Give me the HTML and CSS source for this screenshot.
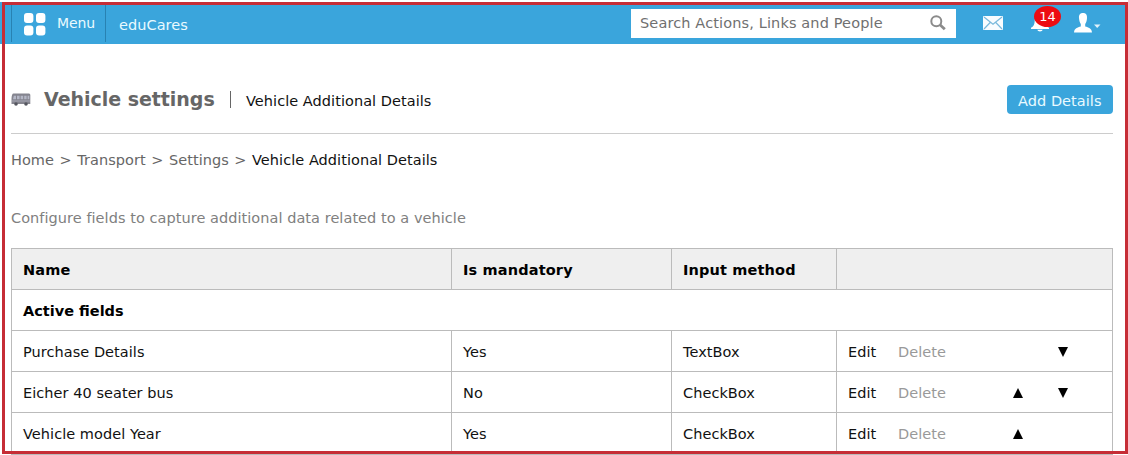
FILE: index.html
```html
<!DOCTYPE html>
<html lang="en">
<head>
<meta charset="utf-8">
<title>Vehicle Additional Details</title>
<link rel="stylesheet" href="styles.css">
</head>
<body>
<header class="topbar">
  <div class="menu">
    <svg class="menu-icon" width="22" height="23" viewBox="0 0 22 23"><g fill="#fff"><rect x="0" y="0" width="9.4" height="10" rx="3"/><rect x="12" y="0" width="9.4" height="10" rx="3"/><rect x="0" y="12.6" width="9.4" height="10" rx="3"/><rect x="12" y="12.6" width="9.4" height="10" rx="3"/></g></svg>
    <span class="menu-label">Menu</span>
  </div>
  <div class="brand"><span class="brand-label">eduCares</span></div>
  <div class="search">
    <span class="search-text">Search Actions, Links and People</span>
    <svg width="17" height="16" viewBox="0 0 17 16" fill="none" stroke="#8b8b8b"><circle cx="6.3" cy="6.2" r="5" stroke-width="2"/><path d="M10 9.8 14.8 14.2" stroke-width="2.8"/></svg>
  </div>
  <svg class="mail" width="20" height="14" viewBox="0 0 20 14"><rect width="20" height="14" rx="1" fill="#f8fcff"/><path d="M1 1 10 8.3 19 1M1 13 7.2 6.5M19 13 12.8 6.5" fill="none" stroke="#79b9dc" stroke-width="1.2"/></svg>
  <div class="bell">
    <svg width="18" height="18" viewBox="0 0 18 18" fill="#fff"><path d="M9 0C5 0 3.8 3 3.7 7 3.6 10.5 2.5 12.5 0 13.7V15H18V13.7C15.5 12.5 14.4 10.5 14.3 7 14.2 3 13 0 9 0ZM6.2 15.7H11.8Q11.3 17.5 9 17.5T6.2 15.7Z"/></svg>
    <span class="badge">14</span>
  </div>
  <svg class="user" width="27" height="20" viewBox="0 0 27 20" fill="#fff"><path d="M9 0C5.7 0 4.8 2.3 5 5 5.2 8 6 9.7 6.8 11V13.5C3.5 14.5 .4 15 0 19.5H18C17.6 15 14.5 14.5 11.2 13.5V11C12 9.7 12.9 8 13 5 13.2 2.3 12.3 0 9 0Z"/><path d="M20 11.5H26.5L23.2 15Z" opacity=".85"/></svg>
</header>
<main class="page">
  <div class="title-row">
    <svg class="bus" width="20" height="14" viewBox="0 0 20 14"><path d="M2.5 .5H18Q19.3 .5 19.3 2V11H.5V6Q.6 .5 2.5 .5Z" fill="#85858f"/><path d="M2.8 2.7H5V6.3H2ZM6 2.7H8.6V6.3H6ZM9.6 2.7H12.2V6.3H9.6ZM13.2 2.7H15.6V6.3H13.2ZM16.6 2.7H18.3V6.3H16.6Z" fill="#b4b7c6"/><path d="M1 8H19" stroke="#a5a6b4"/><circle cx="5" cy="11" r="1.8" fill="#55565f"/><circle cx="15" cy="11" r="1.8" fill="#55565f"/></svg>
    <h1 class="title">Vehicle settings</h1>
    <span class="divider"></span>
    <span class="subtitle">Vehicle Additional Details</span>
    <a class="button"><span class="button-label">Add Details</span></a>
  </div>
  <nav class="crumbs"><span>Home</span><span>&gt;</span><span>Transport</span><span>&gt;</span><span>Settings</span><span>&gt;</span><span class="current">Vehicle Additional Details</span></nav>
  <p class="intro">Configure fields to capture additional data related to a vehicle</p>
  <div class="table">
    <div class="row head"><div class="cell">Name</div><div class="cell">Is mandatory</div><div class="cell">Input method</div><div class="cell"></div></div>
    <div class="row group"><div class="cell">Active fields</div></div>
    <div class="row"><div class="cell">Purchase Details</div><div class="cell">Yes</div><div class="cell">TextBox</div><div class="cell actions"><span>Edit</span><span class="muted">Delete</span><span></span><i class="arrow down"></i></div></div>
    <div class="row"><div class="cell">Eicher 40 seater bus</div><div class="cell">No</div><div class="cell">CheckBox</div><div class="cell actions"><span>Edit</span><span class="muted">Delete</span><i class="arrow"></i><i class="arrow down"></i></div></div>
    <div class="row"><div class="cell">Vehicle model Year</div><div class="cell">Yes</div><div class="cell">CheckBox</div><div class="cell actions"><span>Edit</span><span class="muted">Delete</span><i class="arrow"></i></div></div>
  </div>
</main>
<div class="frame"></div>
</body>
</html>
```
FILE: styles.css
```css
* { box-sizing: border-box; }
body { margin: 0; height: 455px; overflow: hidden; background: #fff; color: #111; font: 14.5px/20px Verdana, "DejaVu Sans", sans-serif; letter-spacing: .05px; white-space: nowrap; }
.topbar { height: 44px; background: #3aa5dc; border-top: 2px solid #fff; display: flex; color: #e9faff; padding-left: 11px; }
.menu { width: 95px; height: 40px; border-left: 1px solid #2882b2; border-right: 1px solid #2882b2; display: flex; padding: 11px 0 0 12px; }
.menu-label { margin: 0 0 0 11px; font-size: 14px; letter-spacing: -.1px; }
.brand { width: 525px; padding: 13px 0 0 13px; }
.search { width: 325px; height: 29px; margin-top: 7px; background: #fff; color: #707070; display: flex; justify-content: space-between; padding: 4px 9px 0; }
.search-text { letter-spacing: .13px; }
.search svg { margin-top: 2px; }
.mail { margin: 14px 0 0 27px; }
.bell { position: relative; margin: 12px 0 0 28px; width: 18px; }
.badge { position: absolute; left: 3px; top: -8px; width: 27px; height: 21px; border-radius: 50%; background: #ed0c12; color: #fff; text-align: center; font-size: 13px; line-height: 21px; }
.user { margin: 11px 0 0 25px; }
.page { padding: 41px 15px 0 11px; }
.title-row { height: 49px; border-bottom: 1px solid #ccc; display: flex; }
.bus { margin-top: 8px; }
.title { margin: 2px 0 0 13px; width: 171px; font-size: 19px; line-height: 24px; color: #666; letter-spacing: -.03px; }
.divider { width: 1px; height: 17px; background: #666; margin: 6px 15px 0 15px; }
.subtitle { margin-top: 6px; }
.button { margin-left: auto; width: 106px; height: 29px; border-radius: 4px; background: #3aa5dc; color: #e9faff; padding: 6px 0 0 11px; }
.crumbs { margin-top: 16px; display: flex; gap: 5.5px; color: #666; }
.current { color: #111; }
.intro { margin: 38px 0 20px; color: #808080; }
.table { width: 1102px; border: 1px solid #bbb; }
.row { display: grid; grid-template-columns: 440px 220px 165px 275px; height: 41px; border-bottom: 1px solid #bbb; }
.cell { padding: 11px 0 0 11px; border-right: 1px solid #bbb; height: 40px; }
.cell:last-child { border-right: 0; }
.head { background: #efefef; }
.head, .group { font-weight: bold; color: #000; letter-spacing: .15px; }
.group { letter-spacing: 0; }
.actions { display: grid; grid-template-columns: 50px 115px 45px 20px; }
.muted { color: #999; }
.arrow { width: 10px; height: 10px; margin-top: 5px; background: #000; clip-path: polygon(50% 0, 100% 100%, 0 100%); }
.down { clip-path: polygon(0 0, 100% 0, 50% 100%); }
.frame { position: absolute; left: 2px; top: 2px; width: 1126px; height: 452px; border: 3px solid #c62d36; }
```
